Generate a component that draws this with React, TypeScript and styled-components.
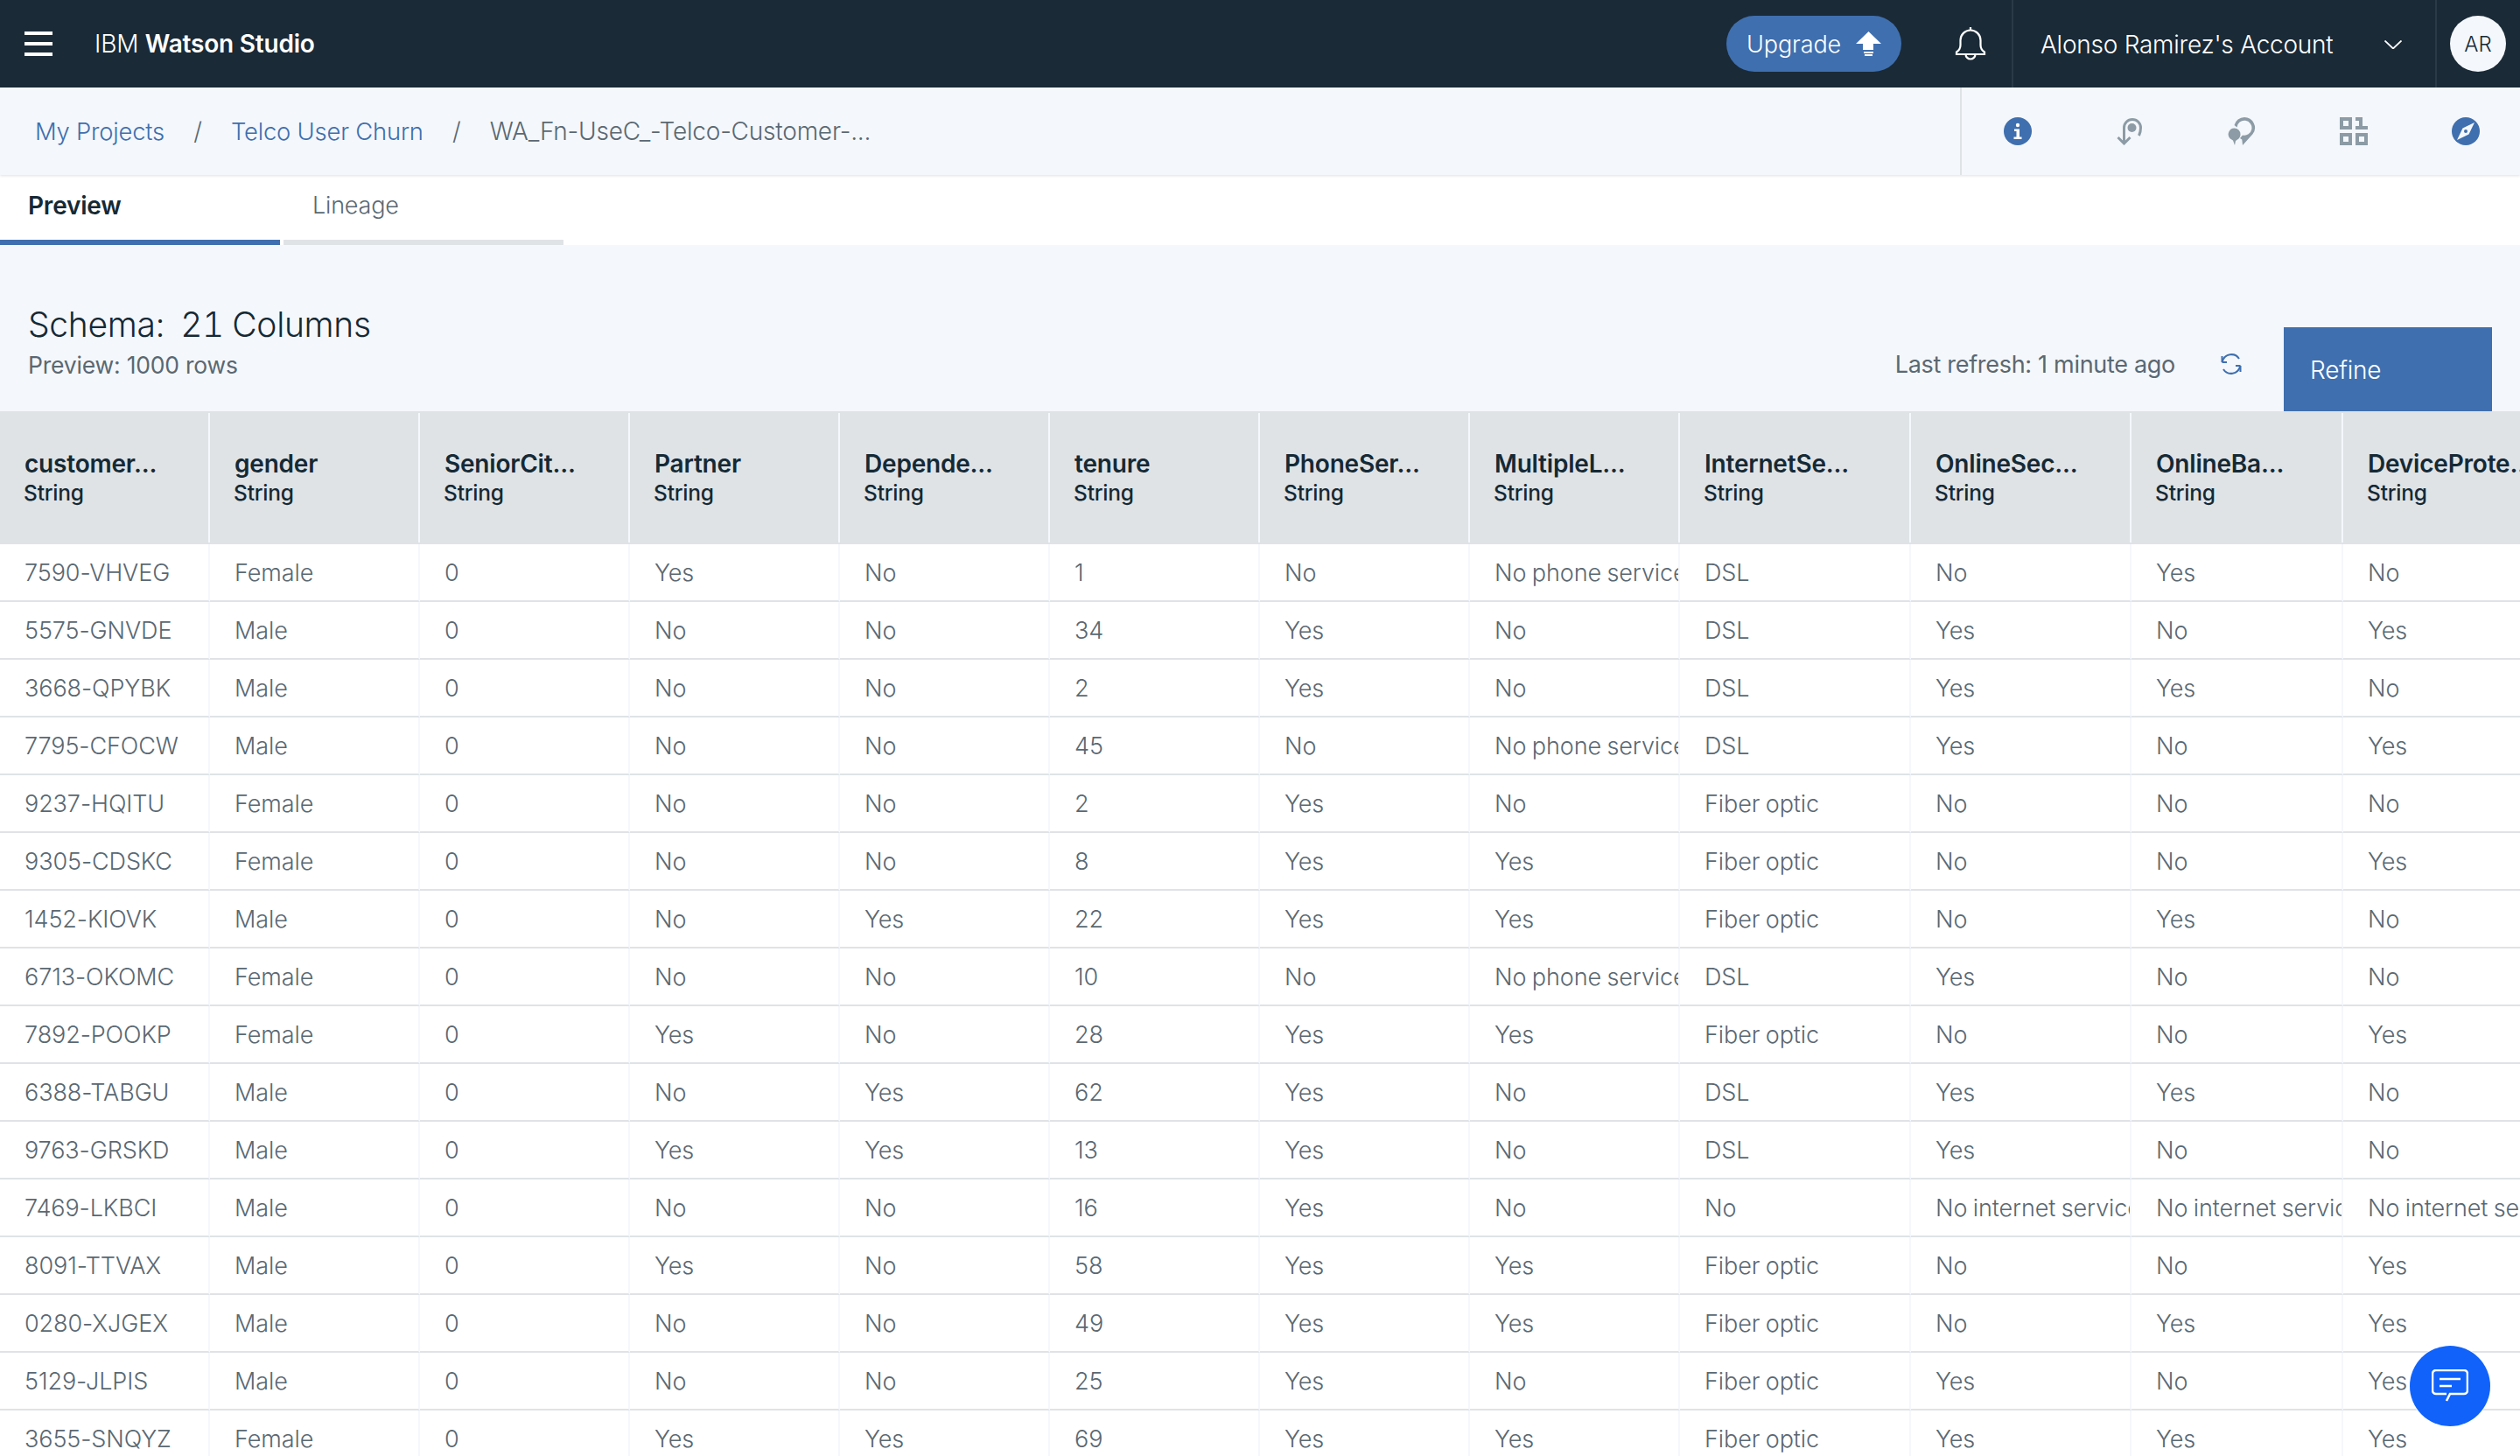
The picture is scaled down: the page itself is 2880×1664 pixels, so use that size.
import React from "react";
import styled, { createGlobalStyle } from "styled-components";

const GlobalStyle = createGlobalStyle`
  html, body {
    margin: 0;
    padding: 0;
    background: #f4f7fb;
  }
  * {
    box-sizing: border-box;
  }
`;

const Page = styled.div`
  width: 2880px;
  height: 1664px;
  overflow: hidden;
  position: relative;
  font-family: "Inter", "Noto Sans", sans-serif;
  font-size: 28px;
  background: #f4f7fb;
  color: #152935;
`;

const TopBar = styled.header`
  height: 100px;
  display: flex;
  align-items: center;
  background: #1a2a37;
  color: #fff;
`;

const Hamburger = styled.div`
  width: 32px;
  height: 28px;
  margin-left: 28px;
  display: flex;
  flex-direction: column;
  justify-content: space-between;
  span {
    display: block;
    height: 4px;
    background: #fff;
  }
`;

const Brand = styled.div`
  margin-left: 48px;
  font-size: 28px;
  font-weight: 300;
  letter-spacing: -0.2px;
  b {
    font-weight: 600;
  }
`;

const TopRight = styled.div`
  margin-left: auto;
  display: flex;
  align-items: center;
  height: 100%;
`;

const UpgradeButton = styled.div`
  width: 200px;
  height: 64px;
  border-radius: 32px;
  background: #3f6fae;
  display: flex;
  align-items: center;
  padding-left: 23px;
  gap: 17px;
  font-weight: 300;
  font-size: 27px;
  letter-spacing: -0.1px;
`;

const BellWrap = styled.div`
  width: 128px;
  height: 100%;
  padding-left: 32px;
  display: flex;
  align-items: center;
  justify-content: center;
  border-right: 2px solid #2a3a47;
`;

const Account = styled.div`
  width: 484px;
  height: 100%;
  padding: 2px 38px 0 31px;
  display: flex;
  align-items: center;
  justify-content: space-between;
  font-size: 28px;
  font-weight: 300;
  letter-spacing: -0.25px;
  border-right: 2px solid #2a3a47;
`;

const AvatarWrap = styled.div`
  width: 95px;
  padding-left: 15px;
`;

const Avatar = styled.div`
  width: 64px;
  height: 64px;
  border-radius: 50%;
  background: #f4f7fb;
  color: #152935;
  display: flex;
  align-items: center;
  justify-content: center;
  font-size: 24px;
  font-weight: 300;
`;

const CrumbBar = styled.nav`
  height: 100px;
  display: flex;
  align-items: stretch;
  background: #f4f7fb;
  box-shadow: 0 1px 3px rgba(0, 0, 0, 0.12);
  position: relative;
`;

const Crumbs = styled.div`
  flex: none;
  width: 2240px;
  display: flex;
  align-items: center;
  padding-left: 40px;
  font-weight: 300;
  letter-spacing: -0.2px;
`;

const CrumbLink = styled.span`
  color: #3f6fae;
  font-size: 27.400px;
`;

const CrumbSep = styled.span`
  color: #5a6872;
  width: 76px;
  text-align: center;
`;

const CrumbCurrent = styled.span`
  color: #5a6872;
`;

const ToolIcons = styled.div`
  flex: none;
  width: 642px;
  display: flex;
  border-left: 2px solid #dfe3e6;
`;

const ToolIcon = styled.div<{ $tone: "blue" | "gray" }>`
  width: 128px;
  display: flex;
  align-items: center;
  justify-content: center;
  color: ${(p) => (p.$tone === "blue" ? "#3f6fae" : "#8c9ba5")};
`;

const TabStrip = styled.div`
  height: 80px;
  background: #fff;
  display: flex;
`;

const Tabs = styled.div`
  display: flex;
  gap: 4px;
`;

const Tab = styled.div<{ $active?: boolean }>`
  width: 320px;
  height: 80px;
  padding: 18px 0 0 ${(p) => (p.$active ? "32px" : "33px")};
  border-bottom: 6px solid ${(p) => (p.$active ? "#3f6fae" : "#dfe3e6")};
  color: ${(p) => (p.$active ? "#152935" : "#5a6872")};
  font-weight: ${(p) => (p.$active ? 600 : 300)};
  font-size: ${(p) => (p.$active ? "28px" : "27px")};
  letter-spacing: -0.2px;
`;

const SchemaBar = styled.section`
  height: 190px;
  display: flex;
  justify-content: space-between;
  padding-left: 32px;
  padding-right: 32px;
`;

const SchemaInfo = styled.div`
  padding-top: 65px;
`;

const SchemaTitle = styled.div`
  font-size: 39px;
  font-weight: 300;
  line-height: 52px;
  letter-spacing: -0.3px;
  word-spacing: -1px;
  font-variant-numeric: tabular-nums;
`;

const SchemaSub = styled.div`
  margin-top: 4px;
  font-size: 26.500px;
  font-weight: 400;
  color: #5a6872;
  letter-spacing: -0.2px;
`;

const Actions = styled.div`
  display: flex;
  align-items: flex-end;
`;

const LastRefresh = styled.div`
  display: flex;
  align-items: center;
  height: 96px;
  padding-bottom: 12px;
  margin-right: 46px;
  gap: 50px;
  font-size: 27px;
  font-weight: 400;
  color: #5a6872;
  letter-spacing: -0.3px;
`;

const RefineButton = styled.div`
  width: 238px;
  height: 96px;
  background: #3f6fae;
  color: #fff;
  font-size: 28px;
  font-weight: 300;
  padding: 32px 0 0 30px;
  letter-spacing: -0.2px;
`;

const Row = styled.div`
  display: grid;
  width: max-content;
  grid-template-columns: repeat(8, 240px) 264px 252px 242px 240px;
`;

const HeadCell = styled.div`
  height: 152px;
  background: #dfe3e6;
  padding: 42px 0 0 28px;
  position: relative;
  &:not(:last-child)::after {
    content: "";
    position: absolute;
    right: 0;
    top: 2px;
    bottom: 2px;
    width: 2px;
    background: #f4f7fb;
  }
`;

const HeadName = styled.div`
  font-size: 28px;
  font-weight: 600;
  line-height: 36px;
  letter-spacing: -0.2px;
  white-space: nowrap;
`;

const HeadType = styled.div`
  font-size: 24.500px;
  font-weight: 500;
  line-height: 30px;
  margin-left: -1px;
  letter-spacing: -0.2px;
`;

const BodyCell = styled.div`
  height: 66px;
  background: #fff;
  border-bottom: 2px solid #dfe3e6;
  border-right: 2px solid #f4f7fb;
  padding-left: 28px;
  line-height: 65px;
  font-size: 27px;
  font-weight: 300;
  color: #5a6872;
  white-space: nowrap;
  overflow: hidden;
  letter-spacing: -0.1px;
  word-spacing: -1px;
`;

const ChatButton = styled.div`
  position: absolute;
  left: 2754px;
  top: 1538px;
  width: 92px;
  height: 92px;
  border-radius: 50%;
  background: #1062fb;
  display: flex;
  align-items: center;
  justify-content: center;
  box-shadow: 0 0 0 1px rgba(255, 255, 255, 0.7);
`;

const columns = [
  "customer...",
  "gender",
  "SeniorCit...",
  "Partner",
  "Depende...",
  "tenure",
  "PhoneSer...",
  "MultipleL...",
  "InternetSe...",
  "OnlineSec...",
  "OnlineBa...",
  "DeviceProte...",
];

const NP = "No phone service";
const NI = "No internet service";
const FO = "Fiber optic";

const rows: (string | number)[][] = [
  ["7590-VHVEG", "Female", 0, "Yes", "No", 1, "No", NP, "DSL", "No", "Yes", "No"],
  ["5575-GNVDE", "Male", 0, "No", "No", 34, "Yes", "No", "DSL", "Yes", "No", "Yes"],
  ["3668-QPYBK", "Male", 0, "No", "No", 2, "Yes", "No", "DSL", "Yes", "Yes", "No"],
  ["7795-CFOCW", "Male", 0, "No", "No", 45, "No", NP, "DSL", "Yes", "No", "Yes"],
  ["9237-HQITU", "Female", 0, "No", "No", 2, "Yes", "No", FO, "No", "No", "No"],
  ["9305-CDSKC", "Female", 0, "No", "No", 8, "Yes", "Yes", FO, "No", "No", "Yes"],
  ["1452-KIOVK", "Male", 0, "No", "Yes", 22, "Yes", "Yes", FO, "No", "Yes", "No"],
  ["6713-OKOMC", "Female", 0, "No", "No", 10, "No", NP, "DSL", "Yes", "No", "No"],
  ["7892-POOKP", "Female", 0, "Yes", "No", 28, "Yes", "Yes", FO, "No", "No", "Yes"],
  ["6388-TABGU", "Male", 0, "No", "Yes", 62, "Yes", "No", "DSL", "Yes", "Yes", "No"],
  ["9763-GRSKD", "Male", 0, "Yes", "Yes", 13, "Yes", "No", "DSL", "Yes", "No", "No"],
  ["7469-LKBCI", "Male", 0, "No", "No", 16, "Yes", "No", "No", NI, NI, NI],
  ["8091-TTVAX", "Male", 0, "Yes", "No", 58, "Yes", "Yes", FO, "No", "No", "Yes"],
  ["0280-XJGEX", "Male", 0, "No", "No", 49, "Yes", "Yes", FO, "No", "Yes", "Yes"],
  ["5129-JLPIS", "Male", 0, "No", "No", 25, "Yes", "No", FO, "Yes", "No", "Yes"],
  ["3655-SNQYZ", "Female", 0, "Yes", "Yes", 69, "Yes", "Yes", FO, "Yes", "Yes", "Yes"],
];

const InfoIcon = () => (
  <svg width="32" height="32" viewBox="0 0 32 32">
    <circle cx="16" cy="16" r="16" fill="currentColor" />
    <circle cx="16" cy="9" r="2.200" fill="#fff" />
    <path d="M12 13.500h6v9h2.500V25h-9v-2.500h3v-6.500H12z" fill="#fff" />
  </svg>
);

const RollbackIcon = () => (
  <svg width="32" height="32" viewBox="0 0 32 32" fill="none" stroke="currentColor" strokeWidth="3">
    <path d="M9.500 29V12A9.500 9.500 0 0 1 28.500 12c0 3-.5 6-2 9" />
    <path d="M2.500 23l7 7 7-7" />
    <circle cx="18.500" cy="12" r="5" fill="currentColor" stroke="none" />
  </svg>
);

const PinsIcon = () => (
  <svg width="32" height="32" viewBox="0 0 32 32" fill="currentColor">
    <path d="M19 0a12 12 0 0 1 9.500 19.300L17 32l-.7-6.500-2.300-1.500 3-3.500A8.500 8.500 0 1 0 10.500 11.500L7.500 9A12 12 0 0 1 19 0z" />
    <path d="M7.500 12.500a7 7 0 0 1 7 7c0 2-.8 3.800-2 5L9 27l-1 5-2-5.500-3.500-2.300a7 7 0 0 1 5-11.700z" />
  </svg>
);

const BinaryIcon = () => (
  <svg width="32" height="32" viewBox="0 0 32 32" fill="currentColor">
    <path fillRule="evenodd" d="M0 0h14v14H0zM4 4v6h6V4zM0 18h14v14H0zM4 22v6h6v-6zM18 18h14v14H18zM22 22v6h6v-6z" />
    <path d="M18 0h8v10h6v4H18v-4h4V4h-4z" />
  </svg>
);

const CompassIcon = () => (
  <svg width="32" height="32" viewBox="0 0 32 32">
    <circle cx="16" cy="16" r="16" fill="currentColor" />
    <path d="M26 6 19.500 19.500 6 26 12.500 12.500z" fill="#f4f7fb" />
    <circle cx="16" cy="16" r="2" fill="currentColor" />
  </svg>
);

const App = () => {
  return (
    <Page>
      <GlobalStyle />
      <TopBar>
        <Hamburger>
          <span />
          <span />
          <span />
        </Hamburger>
        <Brand>
          IBM <b>Watson Studio</b>
        </Brand>
        <TopRight>
          <UpgradeButton>
            Upgrade
            <svg width="29" height="28" viewBox="0 0 29 28" fill="#fff">
              <path d="M14.500 0 29 14h-9v7H8v-7H0z" />
              <path d="M9 23h11v2H9zM10 26h9v2h-9z" />
            </svg>
          </UpgradeButton>
          <BellWrap>
            <svg width="36" height="38" viewBox="0 0 36 38" fill="none" stroke="#fff" strokeWidth="2.200">
              <path d="M18 0v4" />
              <path d="M2 31v-2.500c3-2 4.500-4.500 4.500-8V15a11.500 11.500 0 0 1 23 0v5.500c0 3.500 1.500 6 4.500 8V31z" />
              <path d="M12.500 31a5.500 5.500 0 0 0 11 0" />
            </svg>
          </BellWrap>
          <Account>
            Alonso Ramirez's Account
            <svg width="20" height="10" viewBox="0 0 20 10" fill="none" stroke="#fff" strokeWidth="1.800">
              <path d="M.5.500 10 9.500 19.500.5" />
            </svg>
          </Account>
          <AvatarWrap>
            <Avatar>AR</Avatar>
          </AvatarWrap>
        </TopRight>
      </TopBar>

      <CrumbBar>
        <Crumbs>
          <CrumbLink>My Projects</CrumbLink>
          <CrumbSep>/</CrumbSep>
          <CrumbLink>Telco User Churn</CrumbLink>
          <CrumbSep>/</CrumbSep>
          <CrumbCurrent>WA_Fn-UseC_-Telco-Customer-...</CrumbCurrent>
        </Crumbs>
        <ToolIcons>
          <ToolIcon $tone="blue">
            <InfoIcon />
          </ToolIcon>
          <ToolIcon $tone="gray">
            <RollbackIcon />
          </ToolIcon>
          <ToolIcon $tone="gray">
            <PinsIcon />
          </ToolIcon>
          <ToolIcon $tone="gray">
            <BinaryIcon />
          </ToolIcon>
          <ToolIcon $tone="blue">
            <CompassIcon />
          </ToolIcon>
        </ToolIcons>
      </CrumbBar>

      <TabStrip>
        <Tabs>
          <Tab $active>Preview</Tab>
          <Tab>Lineage</Tab>
        </Tabs>
      </TabStrip>

      <SchemaBar>
        <SchemaInfo>
          <SchemaTitle>Schema:&nbsp; 21 Columns</SchemaTitle>
          <SchemaSub>Preview: 1000 rows</SchemaSub>
        </SchemaInfo>
        <Actions>
          <LastRefresh>
            Last refresh: 1 minute ago
            <svg width="28" height="28" viewBox="0 0 28 28" fill="none" stroke="#3f6fae" strokeWidth="2">
              <path d="M4 11A10.500 10.500 0 0 1 23 8" />
              <path d="M24 17A10.500 10.500 0 0 1 5 20" />
              <path d="M3.500 5v7M3.500 12H9" />
              <path d="M24.500 23v-7M24.500 16H19" />
            </svg>
          </LastRefresh>
          <RefineButton>Refine</RefineButton>
        </Actions>
      </SchemaBar>

      <Row>
        {columns.map((name) => (
          <HeadCell key={name}>
            <HeadName>{name}</HeadName>
            <HeadType>String</HeadType>
          </HeadCell>
        ))}
      </Row>
      {rows.map((row) => (
        <Row key={row[0]}>
          {row.map((value, i) => (
            <BodyCell key={i}>{value}</BodyCell>
          ))}
        </Row>
      ))}

      <ChatButton>
        <svg width="42" height="38" viewBox="0 0 42 38" fill="none" stroke="#fff" strokeWidth="2.600">
          <path d="M24 28h-3l-4 8M24 28h13a4 4 0 0 0 4-4V5a4 4 0 0 0-4-4H5a4 4 0 0 0-4 4v19a4 4 0 0 0 4 4h12" />
          <path d="M9 11h24M9 19h14" />
        </svg>
      </ChatButton>
    </Page>
  );
};

export default App;
